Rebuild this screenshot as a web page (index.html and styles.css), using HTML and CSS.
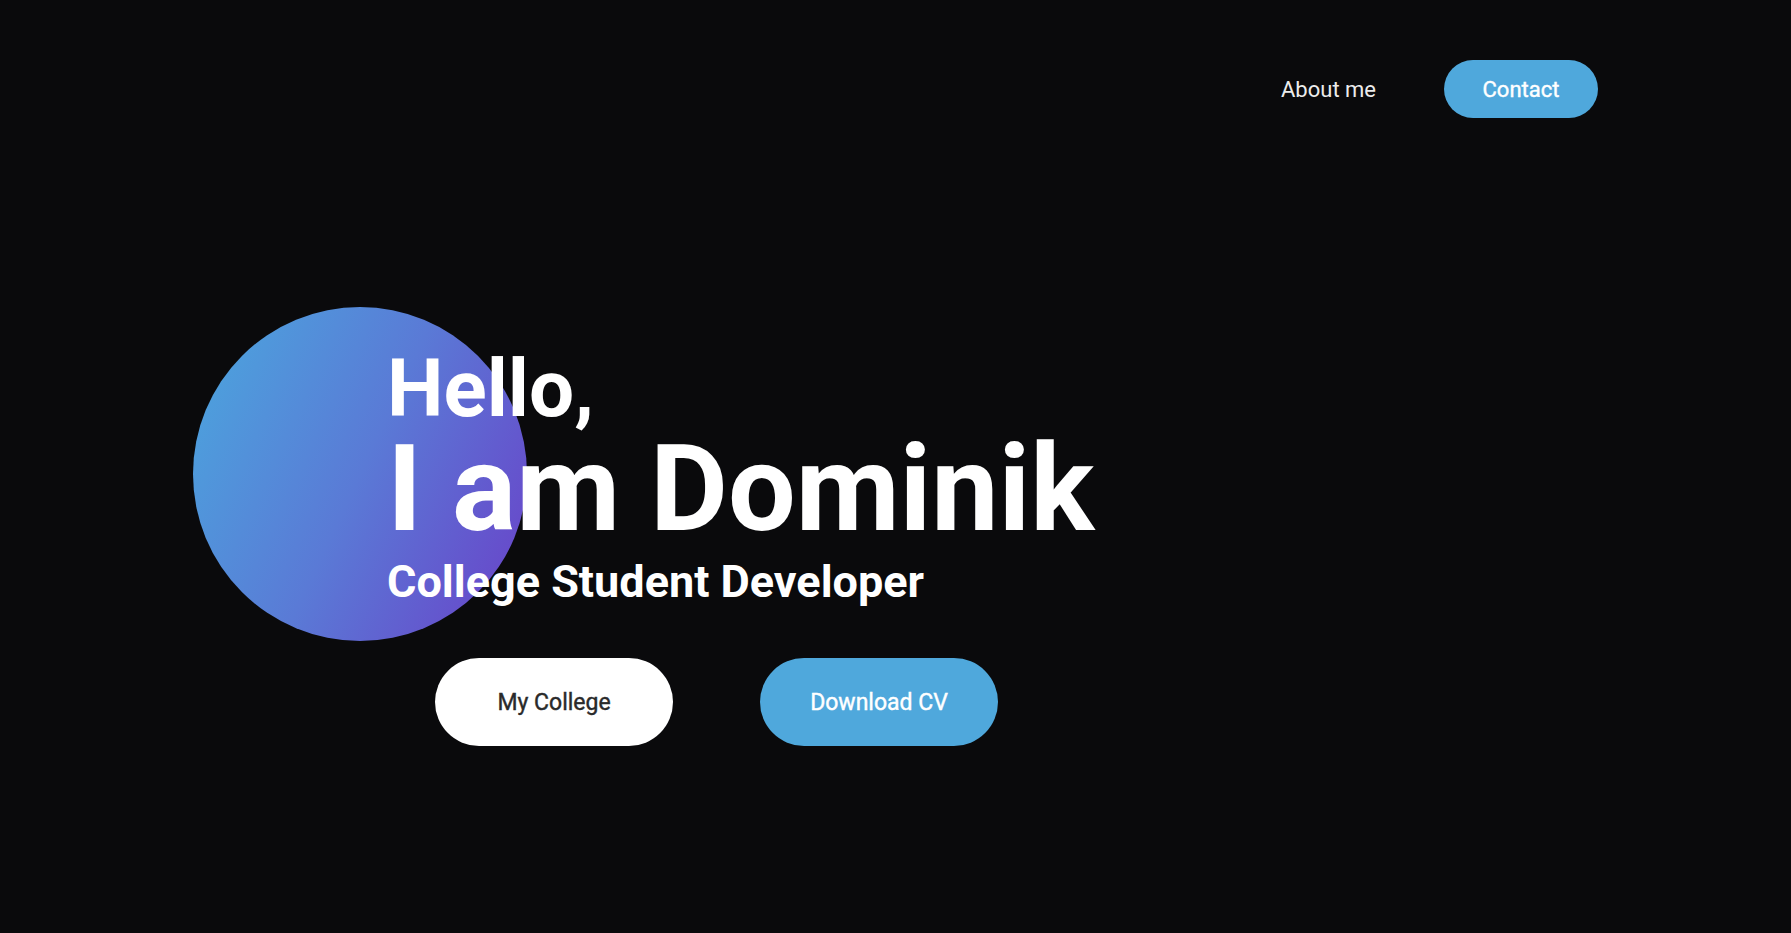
FILE: index.html
```html
<!DOCTYPE html>
<html lang="en">
<head>
<meta charset="utf-8">
<title>Dominik</title>
<link rel="stylesheet" href="styles.css">
</head>
<body>
<header class="nav">
  <a class="nav-link" href="#">About me</a>
  <a class="nav-btn" href="#">Contact</a>
</header>
<main class="hero">
  <div class="blob"></div>
  <div class="hero-text">
    <h2 class="hello">Hello,</h2>
    <h1 class="name">I am Dominik</h1>
    <p class="role">College Student Developer</p>
  </div>
  <div class="actions">
    <a class="btn btn-light" href="#">My College</a>
    <a class="btn btn-blue" href="#">Download CV</a>
  </div>
</main>
</body>
</html>
```
FILE: styles.css
```css
html, body {
  margin: 0;
  padding: 0;
  background: #0a0a0c;
  font-family: Roboto, "Liberation Sans", sans-serif;
  color: #ffffff;
  height: 100%;
  overflow: hidden;
}

a { text-decoration: none; }

.nav {
  display: flex;
  justify-content: flex-end;
  align-items: center;
  gap: 68px;
  padding: 60px 193px 0 0;
  height: 58px;
}

.nav-link {
  color: #ececec;
  font-size: 22px;
  font-weight: 400;
}

.nav-btn {
  display: flex;
  align-items: center;
  justify-content: center;
  width: 154px;
  height: 58px;
  border-radius: 29px;
  background: #4fa8dc;
  color: #ffffff;
  font-size: 22px;
  font-weight: 400;
  -webkit-text-stroke: 0.4px #ffffff;
}

.hero {
  position: relative;
  padding: 231px 0 0 387px;
}

.blob {
  position: absolute;
  left: 193px;
  top: 189px;
  width: 334px;
  height: 334px;
  border-radius: 50%;
  background: linear-gradient(115deg, #4aa8de 0%, #5a7ad6 50%, #6a3fc8 100%);
}

.hero-text {
  position: relative;
}

.hello {
  margin: 0;
  font-size: 80px;
  line-height: 80px;
  font-weight: 700;
}

.name {
  margin: 0;
  font-size: 120px;
  line-height: 121px;
  font-weight: 700;
}

.role {
  margin: 0;
  font-size: 45px;
  line-height: 63px;
  font-weight: 700;
}

.actions {
  position: relative;
  display: flex;
  gap: 87px;
  margin: 45px 0 0 48px;
}

.btn {
  display: flex;
  align-items: center;
  justify-content: center;
  width: 238px;
  height: 88px;
  border-radius: 44px;
  font-size: 23px;
  font-weight: 400;
}

.btn-light {
  background: #ffffff;
  color: #2a2a2a;
  -webkit-text-stroke: 0.4px #2a2a2a;
}

.btn-blue {
  background: #4fa8dc;
  color: #ffffff;
  -webkit-text-stroke: 0.4px #ffffff;
}
```
